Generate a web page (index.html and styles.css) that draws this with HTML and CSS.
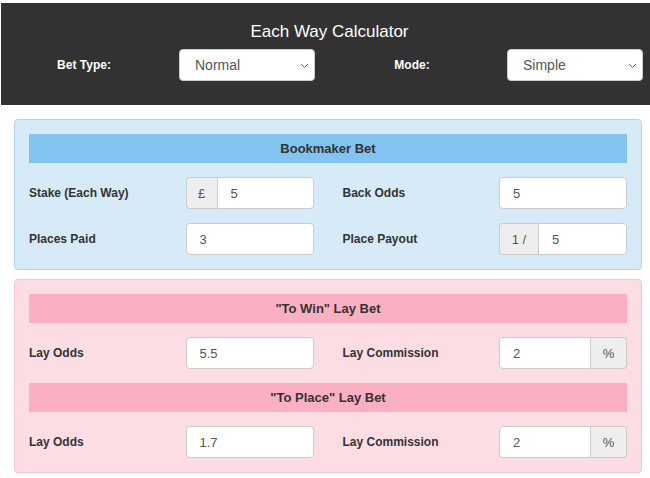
FILE: index.html
```html
<!DOCTYPE html>
<html lang="en">
<head>
  <meta charset="UTF-8">
  <meta name="viewport" content="width=device-width, initial-scale=1.0">
  <title>Each Way Calculator</title>
  <link rel="stylesheet" href="styles.css">
</head>
<body>

  <!-- Top bar -->
  <header class="topbar">
    <h1 class="title">Each Way Calculator</h1>
    <div class="bar-row">
      <label class="bar-label" for="betType">Bet Type:</label>
      <div class="select-wrap">
        <select id="betType">
          <option>Normal</option>
          <option>Each Way Snr</option>
        </select>
        <svg class="chev" width="9" height="6" viewBox="0 0 9 6"><path d="M1 1l3.5 3.5L8 1" fill="none" stroke="#666" stroke-width="1"/></svg>
      </div>
      <label class="bar-label" for="mode">Mode:</label>
      <div class="select-wrap">
        <select id="mode">
          <option>Simple</option>
          <option>Advanced</option>
        </select>
        <svg class="chev" width="9" height="6" viewBox="0 0 9 6"><path d="M1 1l3.5 3.5L8 1" fill="none" stroke="#666" stroke-width="1"/></svg>
      </div>
    </div>
  </header>

  <main class="content">
    <!-- Bookmaker -->
    <section class="panel panel-back">
      <h2 class="panel-head">Bookmaker Bet</h2>
      <div class="form-row">
        <div class="field">
          <label>Stake (Each Way)</label>
          <div class="input-group">
            <span class="addon addon-left">£</span>
            <input type="text" value="5">
          </div>
        </div>
        <div class="field">
          <label>Back Odds</label>
          <div class="input-group">
            <input type="text" value="5">
          </div>
        </div>
      </div>
      <div class="form-row">
        <div class="field">
          <label>Places Paid</label>
          <div class="input-group">
            <input type="text" value="3">
          </div>
        </div>
        <div class="field">
          <label>Place Payout</label>
          <div class="input-group">
            <span class="addon addon-left addon-wide">1 /</span>
            <input type="text" value="5">
          </div>
        </div>
      </div>
    </section>

    <!-- Lay bets -->
    <section class="panel panel-lay">
      <h2 class="panel-head">"To Win" Lay Bet</h2>
      <div class="form-row">
        <div class="field">
          <label>Lay Odds</label>
          <div class="input-group">
            <input type="text" value="5.5">
          </div>
        </div>
        <div class="field">
          <label>Lay Commission</label>
          <div class="input-group">
            <input type="text" value="2">
            <span class="addon addon-right">%</span>
          </div>
        </div>
      </div>
      <h2 class="panel-head">"To Place" Lay Bet</h2>
      <div class="form-row">
        <div class="field">
          <label>Lay Odds</label>
          <div class="input-group">
            <input type="text" value="1.7">
          </div>
        </div>
        <div class="field">
          <label>Lay Commission</label>
          <div class="input-group">
            <input type="text" value="2">
            <span class="addon addon-right">%</span>
          </div>
        </div>
      </div>
    </section>
  </main>

</body>
</html>
```

FILE: styles.css
```css
* {
  box-sizing: border-box;
  font-family: 'Liberation Sans', Arial, sans-serif;
}
body {
  margin: 0;
  background: #fff;
  color: #333;
}

/* Top bar */
.topbar {
  margin: 3px 0 0 1px;
  padding: 19px 0 24px;
  background: #323232;
}
.title {
  margin: 0 0 7px;
  padding-left: 8px;
  font-size: 17px;
  line-height: 20px;
  font-weight: normal;
  color: #fff;
  text-align: center;
}
.bar-row {
  display: grid;
  grid-template-columns: 164px 164px 164px 1fr;
  align-items: center;
}
.bar-label {
  text-align: center;
  color: #fff;
  font-size: 12px;
  font-weight: bold;
  padding-left: 2px;
}
.select-wrap {
  position: relative;
  width: 136px;
  margin-left: 14px;
}
.select-wrap select {
  width: 100%;
  height: 32px;
  padding: 0 12px 0 15px;
  border: 1px solid #ccc;
  border-radius: 4px;
  background: #fff;
  color: #555;
  font-size: 14px;
  -webkit-appearance: none;
  appearance: none;
  outline: none;
}
.chev {
  position: absolute;
  right: 6px;
  top: 14px;
  pointer-events: none;
}

/* Panels */
.content {
  padding: 14px 8px 0 14px;
}
.panel {
  display: flex;
  flex-direction: column;
  gap: 14px;
  padding: 14px;
  border: 1px solid;
  border-radius: 4px;
  margin-bottom: 9px;
}
.panel-back {
  background: #d7eaf8;
  border-color: #b2d5ee;
}
.panel-lay {
  background: #fcdde4;
  border-color: #f4c5d0;
}
.panel-head {
  margin: 0;
  height: 29px;
  line-height: 29px;
  text-align: center;
  font-size: 13px;
  font-weight: bold;
  color: #333;
}
.panel-back .panel-head {
  background: #83c3ef;
}
.panel-lay .panel-head {
  background: #fbb0c1;
}

.form-row {
  display: grid;
  grid-template-columns: 1fr 1fr;
  column-gap: 29px;
}
.field {
  display: grid;
  grid-template-columns: 1fr 128px;
  align-items: center;
}
.field label {
  font-size: 12px;
  font-weight: bold;
  color: #333;
}
.input-group {
  display: flex;
  height: 32px;
}
.input-group input {
  flex: 1;
  min-width: 0;
  height: 100%;
  padding: 0 13px;
  border: 1px solid #ccc;
  border-radius: 4px;
  background: #fff;
  color: #555;
  font-size: 13px;
  outline: none;
}
.addon {
  display: flex;
  align-items: center;
  justify-content: center;
  width: 31px;
  background: #eee;
  border: 1px solid #ccc;
  color: #555;
  font-size: 13px;
}
.addon-wide {
  width: 39px;
}
.addon-left {
  border-right: none;
  border-radius: 4px 0 0 4px;
}
.addon-left + input {
  border-radius: 0 4px 4px 0;
}
.addon-right {
  width: 36px;
  border-left: none;
  border-radius: 0 4px 4px 0;
}
.input-group input:has(+ .addon-right) {
  border-radius: 4px 0 0 4px;
}
```
